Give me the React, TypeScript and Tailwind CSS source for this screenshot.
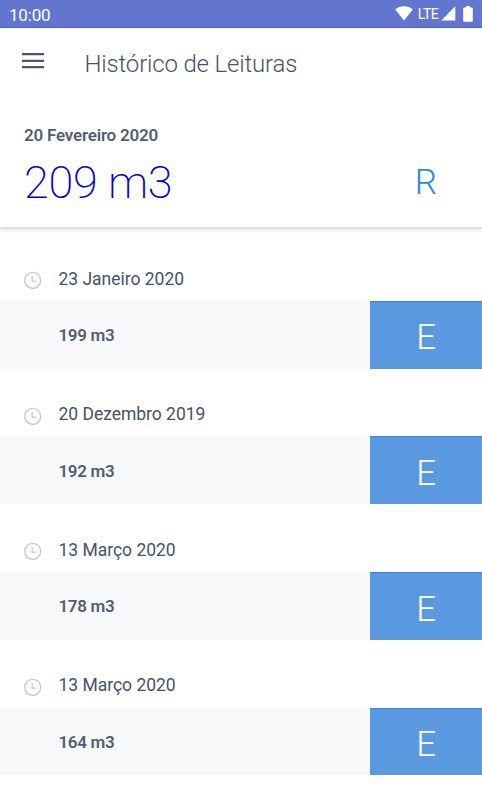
type Reading = {
  date: string;
  value: string;
  type: string;
};

const readings: Reading[] = [
  { date: "23 Janeiro 2020", value: "199 m3", type: "E" },
  { date: "20 Dezembro 2019", value: "192 m3", type: "E" },
  { date: "13 Março 2020", value: "178 m3", type: "E" },
  { date: "13 Março 2020", value: "164 m3", type: "E" },
];

function StatusBar() {
  return (
    <div className="flex h-7 items-center justify-between border-b border-[#3f5bc4] bg-[#6276cf] pr-[9px] pl-[9px] text-white">
      <span className="pt-[3px] text-[17px] leading-none tracking-[-0.2px]">10:00</span>
      <div className="flex items-center">
        <svg className="h-[15px] w-[18px]" viewBox="0 0 18 15" fill="#fff">
          <path d="M0.2 3.6C5 -0.8 13 -0.8 17.8 3.6L9 14.6Z" />
        </svg>
        <span className="ml-[5px] pt-[1px] text-[14px] leading-none tracking-[-0.6px]">LTE</span>
        <svg className="ml-[3px] h-[15px] w-[15px]" viewBox="0 0 15 15" fill="#fff">
          <path d="M14.3 0.3V14.6H0.3Z" />
        </svg>
        <svg className="ml-[7px] h-4 w-[10px]" viewBox="0 0 10 16" fill="#fff">
          <path d="M3 0H7V1.6H9Q9.8 1.6 9.8 2.4V15Q9.8 15.8 9 15.8H1Q0.2 15.8 0.2 15V2.4Q0.2 1.6 1 1.6H3Z" />
        </svg>
      </div>
    </div>
  );
}

function MenuIcon() {
  return (
    <svg className="h-4 w-[22px]" viewBox="0 0 22 16" fill="none" stroke="#4a5870" strokeWidth="2.2">
      <path d="M0 1.2H22M0 7.8H22M0 14.2H22" />
    </svg>
  );
}

function ClockIcon() {
  return (
    <svg className="mt-1 h-[18px] w-[18px]" viewBox="0 0 18 18" fill="none" stroke="#c4c7d0" strokeWidth="1.3">
      <circle cx="8.7" cy="9.3" r="8" />
      <path d="M8.2 5V10.1H12.5" />
    </svg>
  );
}

function ReadingRow({ reading }: { reading: Reading }) {
  return (
    <li className="h-[135.6px] pt-[34px]">
      <div className="flex h-[33.8px] items-start pl-6">
        <ClockIcon />
        <span className="ml-[16.5px] pt-[0.5px] text-[17.5px] leading-[22px] tracking-[-0.02px] text-[#43526a]">{reading.date}</span>
      </div>
      <div className="flex h-[67.8px] bg-[#f6f8fa]">
        <div className="flex flex-1 items-center pt-[2px] pl-[58.5px] text-[17px] font-semibold tracking-[-0.35px] text-[#525f72]">
          {reading.value}
        </div>
        <div className="flex w-[112.5px] items-center justify-center border-t border-[#2d87d2] bg-[#5a98e0] pt-[7px] pl-[1px] text-[35px] font-light text-white">
          {reading.type}
        </div>
      </div>
    </li>
  );
}

export default function App() {
  return (
    <div className="h-[800px] w-full overflow-hidden bg-white font-['Roboto',sans-serif]">
      <StatusBar />
      <header className="h-[201px] border-b-2 border-[#dbe2ea] shadow-[0_2px_3px_#e6ebf0]">
        <div className="flex h-[72px] items-center pl-[21.5px]">
          <button aria-label="Menu" className="mb-[6px]">
            <MenuIcon />
          </button>
          <h1 className="ml-[41px] text-[24px] font-light tracking-[-0.17px] text-[#43536b]">Histórico de Leituras</h1>
        </div>
        <div className="px-6 pt-6">
          <p className="text-[17px] leading-[22px] font-semibold tracking-[-0.2px] text-[#525f72]">20 Fevereiro 2020</p>
          <div className="flex items-center justify-between pt-[10px] leading-[54px]">
            <span className="text-[45px] font-extralight tracking-[-0.3px] text-[#0000d6]">209 m3</span>
            <span className="mr-[21px] text-[35px] font-light text-[#2f86df]">R</span>
          </div>
        </div>
      </header>
      <ul className="pt-[4px]">
        {readings.map((reading, i) => (
          <ReadingRow key={i} reading={reading} />
        ))}
      </ul>
    </div>
  );
}
